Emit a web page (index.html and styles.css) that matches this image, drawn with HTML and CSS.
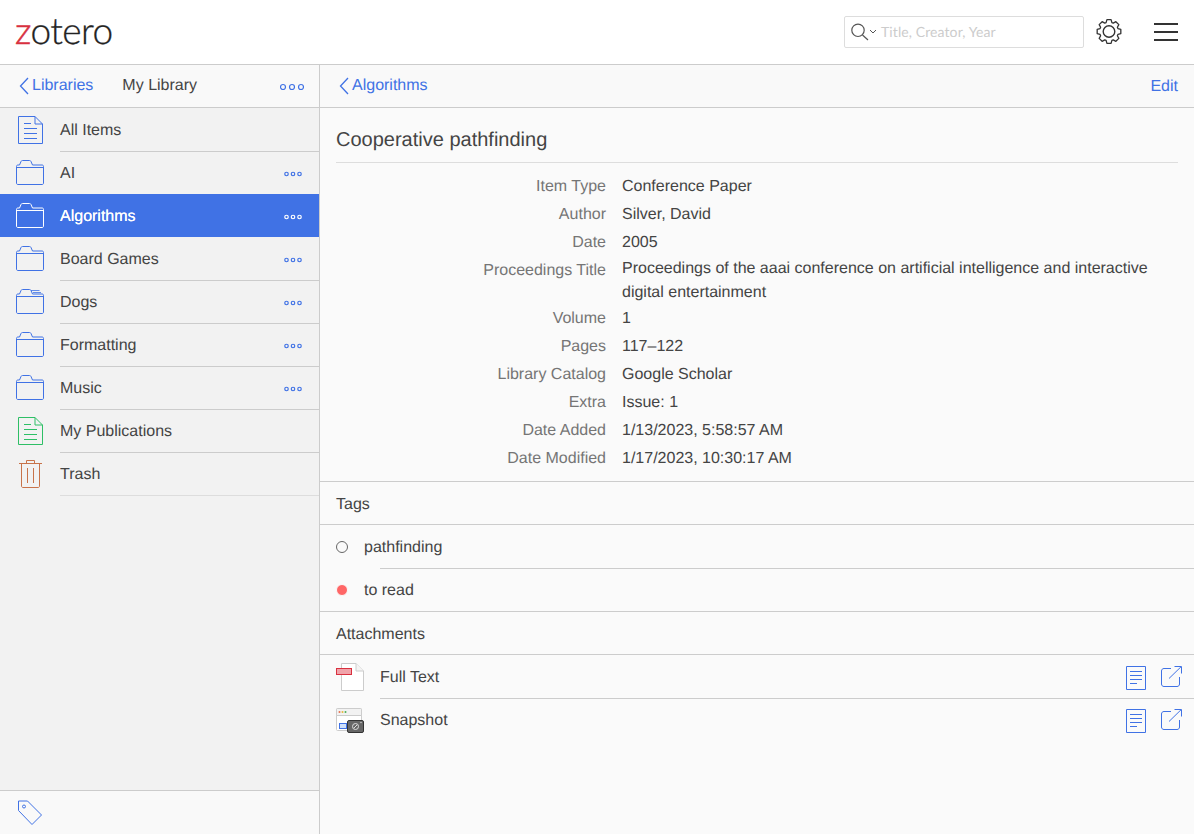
FILE: index.html
```html
<!DOCTYPE html>
<html lang="en">
<head>
<meta charset="utf-8">
<title>Zotero</title>
<link rel="stylesheet" href="styles.css">
</head>
<body>
<svg class="defs" width="0" height="0" aria-hidden="true">
  <symbol id="folder" viewBox="0 0 28 25"><path d="M.5 23V6.500C.5 5.500 1 5 2 5h1.500L5 1.500C5.300.8 5.800.5 6.500.5h7c.7 0 1.200.3 1.500 1L16.500 5H26c1 0 1.500.5 1.500 1.500V23c0 1-.5 1.500-1.500 1.500H2C1 24.500.5 24 .5 23zM.5 7.500h27" fill="none" stroke="currentColor"/></symbol>
  <symbol id="dots" viewBox="0 0 18 6"><circle cx="2.500" cy="3" r="1.750" fill="none" stroke="currentColor" stroke-width="1.200"/><circle cx="9" cy="3" r="1.750" fill="none" stroke="currentColor" stroke-width="1.200"/><circle cx="15.500" cy="3" r="1.750" fill="none" stroke="currentColor" stroke-width="1.200"/></symbol>
  <symbol id="doc" viewBox="0 0 25 28"><path d="M.5.500H17L24.500 8V27.500H.5zM17 .5V8H24.500M6 7.500h7M6 12.500h13M6 17.500h13M6 22.500h13" fill="none" stroke="currentColor"/></symbol>
  <symbol id="chev" viewBox="0 0 10 18"><path d="M9 1 1.500 9 9 17" fill="none" stroke="currentColor" stroke-width="1.300"/></symbol>
  <symbol id="page" viewBox="0 0 20 24"><path d="M.5.500h19v23H.5zM4 5.500h12M4 9.500h12M4 13.500h12M4 17.500h7" fill="none" stroke="currentColor"/></symbol>
  <symbol id="open" viewBox="0 0 21 21"><path d="M10 2.500H3C1.500 2.500.5 3.500.5 5V18c0 1.500 1 2.500 2.500 2.500H16c1.500 0 2.500-1 2.500-2.500V11M8 12.500 20 .8M13.500.5H20.500V7.500" fill="none" stroke="currentColor"/></symbol>
</svg>

<header class="topbar">
  <div class="logo"><span class="logo-z">z</span>otero</div>
  <div class="top-tools">
    <div class="search">
      <svg class="search-icon" width="26" height="18" viewBox="0 0 26 18"><circle cx="7" cy="7.300" r="6.200" fill="none" stroke="#555" stroke-width="1.200"/><path d="m11.500 12 5.500 5" stroke="#555" fill="none" stroke-width="1.200"/><path d="m19 7 3 3 3-3" stroke="#555" fill="none"/></svg>
      <span class="placeholder">Title, Creator, Year</span>
    </div>
    <svg class="gear" width="26" height="26" viewBox="0 0 26 26"><circle cx="13" cy="12.500" r="5.800" fill="none" stroke="#333" stroke-width="1.400"/><path transform="translate(13 12.500)" d="M-2.900-8.940-2.080-11.820 2.080-11.820 2.900-8.940 4.270-8.380 6.880-9.830 9.830-6.880 8.380-4.270 8.940-2.900 11.820-2.080 11.820 2.080 8.940 2.900 8.380 4.270 9.830 6.880 6.880 9.830 4.270 8.380 2.900 8.940 2.080 11.820-2.080 11.820-2.900 8.940-4.270 8.380-6.880 9.830-9.830 6.880-8.380 4.270-8.940 2.900-11.820 2.080-11.820-2.080-8.940-2.900-8.380-4.270-9.830-6.880-6.880-9.830-4.270-8.380z" fill="none" stroke="#333" stroke-width="1.300" stroke-linejoin="round"/></svg>
    <div class="burger"><span></span><span></span><span></span></div>
  </div>
</header>

<div class="main">
  <aside class="sidebar">
    <div class="navbar">
      <a class="back"><svg class="chev" width="10" height="18"><use href="#chev"/></svg>Libraries</a>
      <span class="nav-title">My Library</span>
      <svg class="nav-dots" width="24" height="8" viewBox="0 0 24 8"><circle cx="3" cy="4" r="2.500" fill="none" stroke="currentColor" stroke-width="1.200"/><circle cx="12" cy="4" r="2.500" fill="none" stroke="currentColor" stroke-width="1.200"/><circle cx="21" cy="4" r="2.500" fill="none" stroke="currentColor" stroke-width="1.200"/></svg>
    </div>
    <ul class="tree">
      <li class="row first">
        <span class="row-icon"><svg class="ico-doc" width="25" height="28"><use href="#doc"/></svg></span>
        <div class="row-body"><span>All Items</span></div>
      </li>
      <li class="row">
        <span class="row-icon"><svg class="ico-folder" width="28" height="25"><use href="#folder"/></svg></span>
        <div class="row-body"><span>AI</span><svg class="more" width="18" height="6"><use href="#dots"/></svg></div>
      </li>
      <li class="row selected">
        <span class="row-icon"><svg class="ico-folder" width="28" height="25"><use href="#folder"/></svg></span>
        <div class="row-body"><span>Algorithms</span><svg class="more" width="18" height="6"><use href="#dots"/></svg></div>
      </li>
      <li class="row">
        <span class="row-icon"><svg class="ico-folder" width="28" height="25"><use href="#folder"/></svg></span>
        <div class="row-body"><span>Board Games</span><svg class="more" width="18" height="6"><use href="#dots"/></svg></div>
      </li>
      <li class="row">
        <span class="row-icon"><svg class="ico-folder" width="28" height="25" viewBox="0 0 28 25"><use href="#folder"/><path d="M15 1.500h8.500M17 3.500h8" fill="none" stroke="currentColor" stroke-width=".8"/></svg></span>
        <div class="row-body"><span>Dogs</span><svg class="more" width="18" height="6"><use href="#dots"/></svg></div>
      </li>
      <li class="row">
        <span class="row-icon"><svg class="ico-folder" width="28" height="25"><use href="#folder"/></svg></span>
        <div class="row-body"><span>Formatting</span><svg class="more" width="18" height="6"><use href="#dots"/></svg></div>
      </li>
      <li class="row">
        <span class="row-icon"><svg class="ico-folder" width="28" height="25"><use href="#folder"/></svg></span>
        <div class="row-body"><span>Music</span><svg class="more" width="18" height="6"><use href="#dots"/></svg></div>
      </li>
      <li class="row">
        <span class="row-icon"><svg class="ico-pub" width="25" height="28"><use href="#doc"/></svg></span>
        <div class="row-body"><span>My Publications</span></div>
      </li>
      <li class="row last">
        <span class="row-icon"><svg class="ico-trash" width="24" height="29" viewBox="0 0 24 29"><path d="M0 4.500H23M7.500 4.500V1.500H15.500V4.500M2.500 4.500V27c0 1 .5 1.500 1.500 1.500H19c1 0 1.500-.5 1.500-1.500V4.500M8.500 9V24M14.500 9V24" fill="none" stroke="currentColor"/></svg></span>
        <div class="row-body"><span>Trash</span></div>
      </li>
    </ul>
    <div class="side-foot">
      <svg class="tag-ico" width="26" height="26" viewBox="0 0 26 26"><path d="M1.500 1H10.500L24.500 15 15 24.500 1.500 10.500z" fill="none" stroke="currentColor"/><circle cx="7" cy="6.500" r="1.500" fill="none" stroke="currentColor"/></svg>
    </div>
  </aside>

  <section class="detail">
    <div class="navbar detail-nav">
      <a class="back"><svg class="chev" width="10" height="18"><use href="#chev"/></svg>Algorithms</a>
      <a class="edit">Edit</a>
    </div>
    <div class="item">
      <h1 class="title">Cooperative pathfinding</h1>
      <dl class="fields">
        <div class="field"><dt>Item Type</dt><dd>Conference Paper</dd></div>
        <div class="field"><dt>Author</dt><dd>Silver, David</dd></div>
        <div class="field"><dt>Date</dt><dd>2005</dd></div>
        <div class="field multi"><dt>Proceedings Title</dt><dd>Proceedings of the aaai conference on artificial intelligence and interactive digital entertainment</dd></div>
        <div class="field"><dt>Volume</dt><dd>1</dd></div>
        <div class="field"><dt>Pages</dt><dd>117–122</dd></div>
        <div class="field"><dt>Library Catalog</dt><dd>Google Scholar</dd></div>
        <div class="field"><dt>Extra</dt><dd>Issue: 1</dd></div>
        <div class="field"><dt>Date Added</dt><dd>1/13/2023, 5:58:57 AM</dd></div>
        <div class="field"><dt>Date Modified</dt><dd>1/17/2023, 10:30:17 AM</dd></div>
      </dl>
    </div>
    <h2 class="section-head">Tags</h2>
    <ul class="tags">
      <li class="tag"><span class="tag-dot"></span><div class="tag-body">pathfinding</div></li>
      <li class="tag"><span class="tag-dot red"></span><div class="tag-body">to read</div></li>
    </ul>
    <h2 class="section-head">Attachments</h2>
    <ul class="attachments">
      <li class="att">
        <svg class="att-ico" width="28" height="28" viewBox="0 0 28 28"><path d="M5.500.500H20l7.500 7.500v19.500H5.500z" fill="#fff" stroke="#ccc"/><path d="M20 .5V8h7.500" fill="#f4f4f4" stroke="#ccc"/><rect x=".5" y="5.500" width="15" height="6" fill="#f0a3aa" stroke="#d9303f"/></svg>
        <div class="att-body">
          <span>Full Text</span>
          <svg class="att-doc" width="20" height="24"><use href="#page"/></svg>
          <svg class="att-open" width="21" height="21"><use href="#open"/></svg>
        </div>
      </li>
      <li class="att">
        <svg class="att-ico" width="28" height="25" viewBox="0 0 28 25"><rect x=".5" y=".5" width="25" height="22" rx="1" fill="#fff" stroke="#ccc"/><path d="M.5 7.500h25V1.500c0-.5-.5-1-1-1h-23c-.5 0-1 .5-1 1z" fill="#f2f2f2" stroke="#ccc"/><circle cx="3.500" cy="4" r="1" fill="#e8704f"/><circle cx="6.500" cy="4" r="1" fill="#e4b93c"/><circle cx="9.500" cy="4" r="1" fill="#4cae5a"/><rect x="3.500" y="15.500" width="7" height="5" fill="#cfe0fb" stroke="#4072e5"/><rect x="11.500" y="12.500" width="16" height="12" rx="1.500" fill="#666" stroke="#333"/><circle cx="19.500" cy="18.500" r="3" fill="none" stroke="#ddd"/><path d="m18 20 3-3" stroke="#ddd"/><circle cx="25" cy="14.500" r=".7" fill="#ddd"/></svg>
        <div class="att-body no-line">
          <span>Snapshot</span>
          <svg class="att-doc" width="20" height="24"><use href="#page"/></svg>
          <svg class="att-open" width="21" height="21"><use href="#open"/></svg>
        </div>
      </li>
    </ul>
  </section>
</div>
</body>
</html>
```

FILE: styles.css
```css
* { box-sizing: border-box; }
html, body { margin: 0; height: 100%; }
body {
  width: 1194px;
  height: 834px;
  overflow: hidden;
  font: 16px/24px "Liberation Sans", Arial, sans-serif;
  text-rendering: geometricPrecision;
  color: #444;
  background: #fff;
  display: flex;
  flex-direction: column;
}
.defs { display: block; height: 0; }
ul, dl, dd, h1, h2 { margin: 0; padding: 0; list-style: none; font-weight: 400; }

.topbar {
  height: 65px;
  flex: none;
  border-bottom: 1px solid #ccc;
  display: flex;
  align-items: center;
  justify-content: space-between;
  padding: 0 16px 0 15px;
}
.logo {
  font: 300 37px/48px Lato, sans-serif;
  color: #222;
  letter-spacing: -.55px;
  margin-top: -5px;
  -webkit-text-stroke: .3px #222;
}
.logo-z { color: #d8303f; -webkit-text-stroke: .5px #d8303f; }
.top-tools { display: flex; align-items: center; }
.search {
  width: 240px;
  height: 32px;
  border: 1px solid #ddd;
  border-radius: 2px;
  display: flex;
  align-items: center;
  padding-left: 6px;
}
.search-icon { flex: none; }
.placeholder {
  margin-left: 4px;
  font: 14px/20px Lato, sans-serif;
  letter-spacing: .1px;
  color: #ccc;
}
.gear { margin-left: 12px; margin-right: 32px; }
.burger { width: 24px; height: 18px; display: flex; flex-direction: column; justify-content: space-between; }
.burger span { display: block; height: 2px; background: #333; }

.main { flex: 1; display: flex; min-height: 0; }
.sidebar {
  width: 320px;
  flex: none;
  background: #f2f2f2;
  border-right: 1px solid #ccc;
  display: flex;
  flex-direction: column;
}
.navbar {
  height: 43px;
  flex: none;
  background: #f9f9f9;
  border-bottom: 1px solid #ccc;
  display: flex;
  align-items: center;
}
.sidebar .navbar { padding: 0 15px 0 19px; }
.back {
  display: flex;
  align-items: center;
  color: #4072e5;
  margin-top: -1px;
}
.chev { margin-right: 3px; }
.nav-title { margin-left: 29px; margin-top: -1px; flex: 1; }
.nav-dots { color: #4072e5; margin-top: 2px; }

.tree { flex: 1; }
.row {
  height: 43px;
  display: flex;
  align-items: stretch;
}
.row-icon {
  width: 60px;
  flex: none;
  display: flex;
  align-items: center;
  padding-left: 16px;
  color: #4072e5;
}
.row-body {
  flex: 1;
  display: flex;
  align-items: center;
  justify-content: space-between;
  padding: 1px 17px 0 0;
  border-top: 1px solid #ccc;
}
.more { color: #4072e5; }
.first .row-body { border-top-color: transparent; }
.last .row-body { box-shadow: 0 1px 0 #ddd; }
.selected { background: #4072e5; color: #fff; }
.selected .row-icon, .selected .more { color: #fff; }
.selected .row-body { border-top-color: transparent; }
.selected + .row .row-body { border-top-color: transparent; }
.selected .row-body span { text-shadow: 0 0 .6px #fff; }
.ico-doc, .ico-pub { margin-left: 2px; margin-top: 1px; }
.ico-pub { color: #2ebf66; }
.ico-trash { color: #c8734a; margin-left: 3px; }
.side-foot {
  height: 44px;
  flex: none;
  background: #f9f9f9;
  border-top: 1px solid #ccc;
  display: flex;
  align-items: center;
  padding-left: 17px;
  color: #4072e5;
}

.detail { flex: 1; background: #fafafa; min-width: 0; }
.detail-nav { justify-content: space-between; padding: 0 16px 0 19px; }
.edit { color: #4072e5; margin-top: 1px; }
.item { padding: 16px 16px 8px; }
.title {
  font-size: 20px;
  line-height: 32px;
  height: 39px;
  border-bottom: 1px solid #ddd;
}
.fields { padding-top: 10px; }
.field {
  display: flex;
  gap: 16px;
  min-height: 28px;
  line-height: 28px;
}
.field.multi { line-height: 24px; }
.field dt {
  width: 270px;
  flex: none;
  text-align: right;
  color: #757575;
}
.field.multi dt { line-height: 28px; }
.field dd { flex: 1; }

.section-head {
  height: 44px;
  font-size: 16px;
  line-height: 45px;
  padding-left: 16px;
  border-top: 1px solid #ccc;
  border-bottom: 1px solid #ccc;
  margin-top: -1px;
}
.item + .section-head { margin-top: 0; }
.tag { height: 43px; display: flex; align-items: center; position: relative; padding-left: 16px; }
.tag:first-child { height: 44px; }
.tag-dot {
  width: 12px;
  height: 12px;
  flex: none;
  border-radius: 50%;
  border: 1px solid #666;
}
.tag-dot.red { background: #ff6666; border: 1px solid #fafafa; margin-top: -1px; }
.tag-body {
  flex: 1;
  margin-left: 16px;
  height: 100%;
  padding-top: 1px;
  display: flex;
  align-items: center;
}
.tag:first-child .tag-body { padding-top: 2px; }
.tag:first-child::after {
  content: "";
  position: absolute;
  left: 60px;
  right: 0;
  bottom: 0;
  height: 1px;
  background: #ccc;
}

.att { height: 43px; display: flex; align-items: center; padding-left: 16px; }
.att:first-child { height: 44px; }
.att-ico { flex: none; width: 28px; }
.att-body {
  flex: 1;
  height: 100%;
  margin-left: 16px;
  display: flex;
  align-items: center;
  padding: 2px 12px 0 0;
  border-bottom: 1px solid #ccc;
}
.att-body.no-line { border-bottom: 0; padding-top: 0; }
.att-body span { flex: 1; padding-top: 1px; }
.att-doc { color: #4072e5; margin-right: 15px; }
.att-open { color: #4072e5; margin-bottom: 3px; }
```
